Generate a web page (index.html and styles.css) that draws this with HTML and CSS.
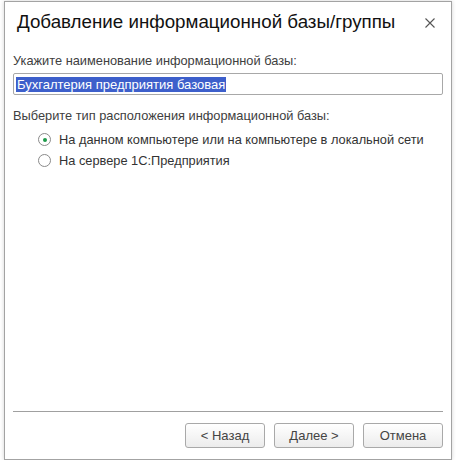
FILE: index.html
```html
<!DOCTYPE html>
<html lang="ru">
<head>
<meta charset="utf-8">
<link rel="stylesheet" href="styles.css">
</head>
<body>
<div class="window">
  <div class="titlebar">
    <div class="title">Добавление информационной базы/группы</div>
    <svg class="close" width="10" height="10" viewBox="0 0 10 10"><path d="M0.5 0.5 L9.5 9.5 M9.5 0.5 L0.5 9.5" stroke="#555" stroke-width="1.1" fill="none"/></svg>
  </div>
  <div class="content">
    <div class="label">Укажите наименование информационной базы:</div>
    <div class="input"><span class="sel">Бухгалтерия предприятия базовая</span></div>
    <div class="label second">Выберите тип расположения информационной базы:</div>
    <div class="radios">
      <div class="radio-row"><span class="radio checked"></span><span class="rtext">На данном компьютере или на компьютере в локальной сети</span></div>
      <div class="radio-row"><span class="radio"></span><span class="rtext">На сервере 1С:Предприятия</span></div>
    </div>
  </div>
  <div class="footer">
    <div class="sep"></div>
    <div class="buttons">
      <div class="btn">&lt; Назад</div>
      <div class="btn">Далее &gt;</div>
      <div class="btn">Отмена</div>
    </div>
  </div>
</div>
</body>
</html>
```
FILE: styles.css
```css
html, body {
  margin: 0;
  padding: 0;
  background: #ffffff;
}
body {
  padding: 1px 0 0 4px;
  font-family: "Liberation Sans", Arial, sans-serif;
}
.window {
  box-sizing: border-box;
  width: 448px;
  height: 459px;
  border: 1px solid #a3a3a3;
  background: #fff;
  box-shadow: 0 0 4px rgba(0,0,0,0.18);
  display: flex;
  flex-direction: column;
}
.titlebar {
  display: flex;
  align-items: center;
  justify-content: space-between;
  height: 40px;
  padding: 0 16px 0 12px;
}
.title {
  font-size: 18.75px;
  color: #111;
}
.close {
  display: block;
  margin-top: 1px;
}
.content {
  flex: 1;
  padding: 0 8px;
}
.label {
  font-size: 12.8px;
  color: #404040;
  line-height: 15px;
  margin-top: 11px;
}
.label.second {
  margin-top: 13px;
}
.input {
  box-sizing: border-box;
  height: 22px;
  margin-top: 5px;
  border: 1px solid #a8a8a8;
  border-radius: 2px;
  padding: 2px 2px;
  display: flex;
  align-items: center;
}
.sel {
  background: #3d5fcb;
  color: #fff;
  font-size: 13px;
  line-height: 15px;
  padding: 0 1px;
}
.radios {
  padding-left: 25px;
  margin-top: 6px;
}
.radio-row {
  display: flex;
  align-items: center;
  height: 21px;
}
.radio {
  box-sizing: border-box;
  width: 13px;
  height: 13px;
  border-radius: 50%;
  border: 1px solid #8a8a8a;
  background: #fff;
  margin-right: 8px;
  position: relative;
}
.radio.checked::after {
  content: "";
  position: absolute;
  left: 3.5px;
  top: 3.5px;
  width: 4px;
  height: 4px;
  border-radius: 50%;
  background: #1e9a4a;
}
.rtext {
  font-size: 12.8px;
  color: #333;
}
.footer {
  padding: 0 8px 11px 8px;
}
.sep {
  height: 1px;
  background: #a0a0a0;
}
.buttons {
  display: flex;
  justify-content: flex-end;
  gap: 9px;
  margin-top: 11px;
}
.btn {
  box-sizing: border-box;
  flex: 0 0 80px;
  height: 25px;
  border: 1px solid #a9a9a9;
  border-radius: 3px;
  background: linear-gradient(#ffffff, #ececec);
  font-size: 13px;
  color: #444;
  display: flex;
  align-items: center;
  justify-content: center;
}
```
